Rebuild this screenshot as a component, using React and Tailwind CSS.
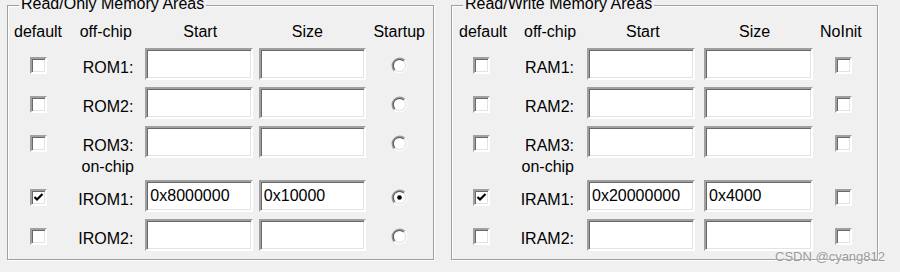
import React from "react";

const sunken =
  "border-2 border-t-[#a0a0a0] border-l-[#a0a0a0] border-b-[#ffffff] border-r-[#ffffff] shadow-[inset_1px_1px_0_#696969,inset_-1px_-1px_0_#e3e3e3] bg-white";

const Checkbox = ({ checked }) => (
  <div className={`w-[17px] h-[17px] ${sunken} flex items-center justify-center`}>
    {checked && (
      <svg width="11" height="11" viewBox="0 0 11 11">
        <path d="M1.5 5 L4 7.5 L9.5 2" fill="none" stroke="#000" strokeWidth="2.2" />
      </svg>
    )}
  </div>
);

const Radio = ({ on }) => (
  <svg width="17" height="17" viewBox="0 0 17 17">
    <circle cx="8.5" cy="8.5" r="7" fill="#fff" />
    <path d="M3.2 13.8 A7.5 7.5 0 0 1 13.8 3.2" fill="none" stroke="#9a9a9a" strokeWidth="1.3" />
    <path d="M4.1 12.9 A6.2 6.2 0 0 1 12.9 4.1" fill="none" stroke="#5f5f5f" strokeWidth="1.3" />
    <path d="M13.8 3.2 A7.5 7.5 0 0 1 3.2 13.8" fill="none" stroke="#ffffff" strokeWidth="1.3" />
    <path d="M12.9 4.1 A6.2 6.2 0 0 1 4.1 12.9" fill="none" stroke="#e3e3e3" strokeWidth="1.3" />
    {on && <circle cx="8.5" cy="8.5" r="2.3" fill="#000" />}
  </svg>
);

const Field = ({ value, className }) => (
  <div className={`h-[32px] ${sunken} pl-[3px] pt-[5px] leading-[18px] whitespace-nowrap ${className}`}>
    {value}
  </div>
);

const GroupBox = ({ title, children }) => (
  <div className="relative w-[427px] h-[255px] border border-[#a0a0a0] shadow-[inset_1px_1px_0_#ffffff,1px_1px_0_#ffffff] pt-[17px]">
    <span className="absolute left-[11px] -top-[11px] px-[2px] bg-[#f0f0f0] leading-[18px] whitespace-nowrap">
      {title}
    </span>
    {children}
  </div>
);

const left = {
  c1: "w-[62px]",
  lab: "w-[64px]",
  f1: "ml-[12px] w-[108px]",
  f2: "ml-[6px] w-[108px]",
  c5: "w-[67px]",
  h1: "pl-[6px]",
  hLab: "pl-[10px]",
  hStart: "pl-[38px]",
  hSize: "pl-[33px]",
  hLast: "pl-[7px]",
};

const right = {
  c1: "w-[58px]",
  lab: "w-[64px]",
  f1: "ml-[13px] w-[108px]",
  f2: "ml-[9px] w-[109px]",
  c5: "w-[60px]",
  h1: "pl-[7px]",
  hLab: "pl-[14px]",
  hStart: "pl-[39px]",
  hSize: "pl-[35px]",
  hLast: "pl-[7px]",
};

const Header = ({ g, last }) => (
  <div className="flex h-[18px] leading-[18px] whitespace-nowrap">
    <div className={`${g.c1} ${g.h1}`}>default</div>
    <div className={`${g.lab} ${g.hLab}`}>off-chip</div>
    <div className={`${g.f1} ${g.hStart}`}>Start</div>
    <div className={`${g.f2} ${g.hSize}`}>Size</div>
    <div className={`${g.c5} ${g.hLast}`}>{last}</div>
  </div>
);

const Row = ({ g, r, radio, className = "" }) => (
  <div className={`flex items-center h-[32px] ${className}`}>
    <div className={`${g.c1} flex justify-center pt-[2px]`}>
      <Checkbox checked={r.def} />
    </div>
    <div className={`${g.lab} self-start mt-[11px] text-right leading-[18px]`}>{r.label}</div>
    <Field value={r.start} className={g.f1} />
    <Field value={r.size} className={g.f2} />
    <div className={`${g.c5} flex justify-center pt-[2px]`}>
      {radio ? <Radio on={r.on} /> : <Checkbox checked={false} />}
    </div>
  </div>
);

const Group = ({ title, g, rows, last, radio }) => (
  <GroupBox title={title}>
    <Header g={g} last={last} />
    <div className="flex flex-col mt-[7px]">
      {rows.slice(0, 3).map((r, i) => (
        <Row key={r.label} g={g} r={r} radio={radio} className={i > 0 ? "mt-[7px]" : ""} />
      ))}
      <div className="flex h-[18px] leading-[18px]">
        <div className={g.c1} />
        <div className={`${g.lab} text-right`}>on-chip</div>
      </div>
      <Row g={g} r={rows[3]} radio={radio} className="mt-[4px]" />
      <Row g={g} r={rows[4]} radio={radio} className="mt-[7px]" />
    </div>
  </GroupBox>
);

const romRows = [
  { label: "ROM1:", start: "", size: "" },
  { label: "ROM2:", start: "", size: "" },
  { label: "ROM3:", start: "", size: "" },
  { label: "IROM1:", start: "0x8000000", size: "0x10000", def: true, on: true },
  { label: "IROM2:", start: "", size: "" },
];

const ramRows = [
  { label: "RAM1:", start: "", size: "" },
  { label: "RAM2:", start: "", size: "" },
  { label: "RAM3:", start: "", size: "" },
  { label: "IRAM1:", start: "0x20000000", size: "0x4000", def: true },
  { label: "IRAM2:", start: "", size: "" },
];

export default function App() {
  return (
    <div className="relative w-[900px] h-[272px] overflow-hidden bg-[#f0f0f0] text-[16px] text-black font-['Liberation_Sans',Arial,sans-serif]">
      <div className="flex pt-[5px] pl-[7px] gap-[17px]">
        <Group title="Read/Only Memory Areas" g={left} rows={romRows} last="Startup" radio />
        <Group title="Read/Write Memory Areas" g={right} rows={ramRows} last="NoInit" />
      </div>
      <span className="absolute left-[775px] top-[249px] text-[13px] leading-[15px] text-[#9a9a9a] [text-shadow:0_0_2px_#ffffff] whitespace-nowrap">
        CSDN @cyang812
      </span>
    </div>
  );
}
